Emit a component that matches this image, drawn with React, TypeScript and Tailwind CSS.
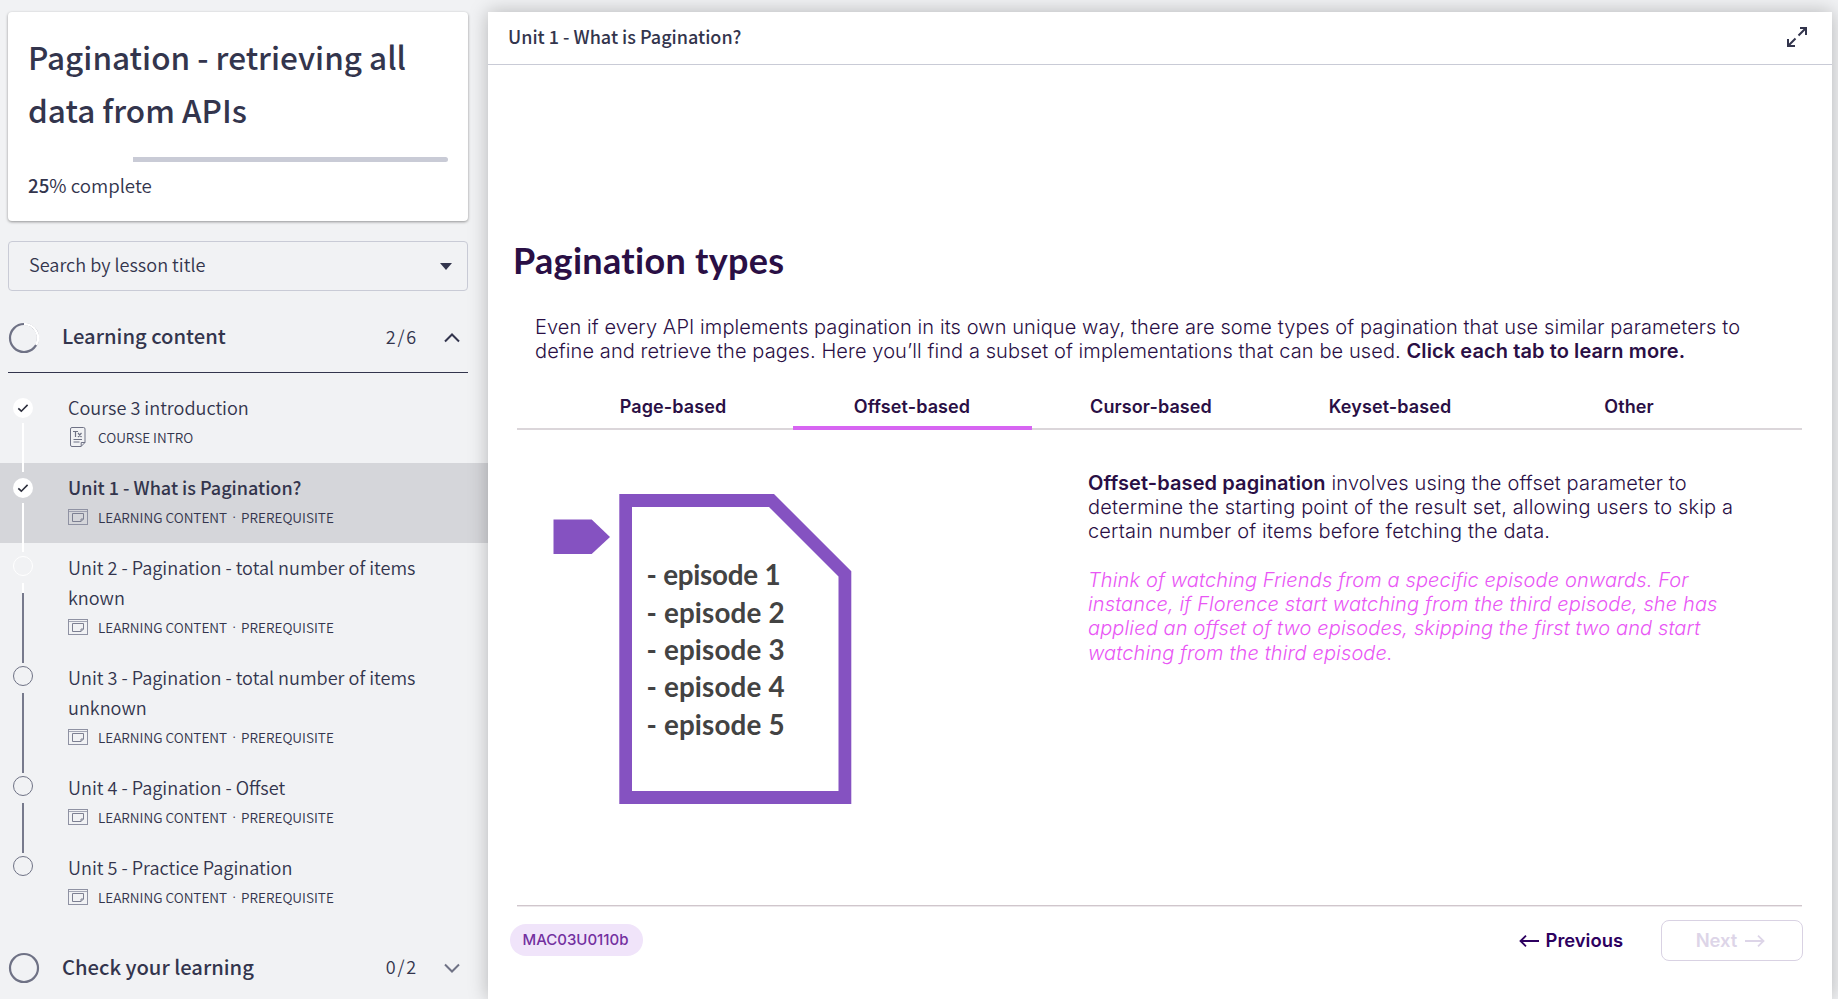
import React from "react";

const SOURCE = "font-['Noto_Sans_CJK_SC',sans-serif]";
const INTER = "font-['Inter',sans-serif]";

type Lesson = {
  title: string[];
  meta: string[];
  state: "done" | "next" | "open";
  active?: boolean;
  last?: boolean;
  doc?: boolean;
};

const PREREQUISITE = ["LEARNING CONTENT", "PREREQUISITE"];

const lessons: Lesson[] = [
  { title: ["Course 3 introduction"], meta: ["COURSE INTRO"], state: "done", doc: true },
  { title: ["Unit 1 - What is Pagination?"], meta: PREREQUISITE, state: "done", active: true },
  { title: ["Unit 2 - Pagination - total number of items", "known"], meta: PREREQUISITE, state: "next" },
  { title: ["Unit 3 - Pagination - total number of items", "unknown"], meta: PREREQUISITE, state: "open" },
  { title: ["Unit 4 - Pagination - Offset"], meta: PREREQUISITE, state: "open" },
  { title: ["Unit 5 - Practice Pagination"], meta: PREREQUISITE, state: "open", last: true },
];

const tabs = ["Page-based", "Offset-based", "Cursor-based", "Keyset-based", "Other"];

function TextDocIcon() {
  return (
    <svg width="20" height="20" viewBox="0 0 20 20" fill="none" stroke="#6f7285" strokeWidth="1">
      <path d="M4 .5h11.500a1.500 1.500 0 0 1 1.500 1.500v13.500l-4 4H4A1.500 1.500 0 0 1 2.500 18V2A1.500 1.500 0 0 1 4 .5z" />
      <path d="M17 15.500h-3.800v4" />
      <path d="M5 4.500h5M7.500 4.500v5.500M10 6l3.500 4M13.500 6L10 10" strokeWidth="1.200" />
      <path d="M5.500 12.500h8.500M5.500 15h6" />
    </svg>
  );
}

function ContentIcon() {
  return (
    <svg width="20" height="16" viewBox="0 0 20 16" fill="none" stroke="#8f92a3" strokeWidth="1">
      <rect x=".5" y=".5" width="19" height="15" />
      <path d="M.5 2.500h19" strokeWidth=".8" />
      <path d="M4.500 4.500h11v5.500l-2.500 2.500H4.500z" stroke="#7d8092" />
      <path d="M15.500 10H13v2.500" stroke="#7d8092" />
    </svg>
  );
}

function Marker({ state }: { state: Lesson["state"] }) {
  if (state === "done") {
    return (
      <svg className="mt-[15px] shrink-0" width="20" height="20" viewBox="0 0 20 20" fill="none">
        <circle cx="10" cy="10" r="10" fill="#fff" />
        <path d="M5.300 10.300l3 2.900 6.300-6.300" stroke="#2d2f3d" strokeWidth="1.600" />
      </svg>
    );
  }
  return (
    <svg className="mt-[13px] mb-[2px] shrink-0" width="20" height="20" viewBox="0 0 20 20" fill="none">
      <circle cx="10" cy="10" r="9.500" stroke={state === "next" ? "#fff" : "#6f7285"} />
    </svg>
  );
}

function Rail({ lesson }: { lesson: Lesson }) {
  return (
    <div className="z-10 flex w-[20px] shrink-0 flex-col items-center">
      <Marker state={lesson.state} />
      {!lesson.last && (
        <div className={"mt-[5px] flex w-[2px] grow flex-col " + (lesson.state === "done" ? "-mb-[9px] bg-white" : "-mb-[10px] bg-[#777a8c]")}>
          {lesson.state === "next" && <div className="h-[10px] bg-white" />}
        </div>
      )}
    </div>
  );
}

function SectionHeader({ title, count, open }: { title: string; count: string; open: boolean }) {
  return (
    <div className={"ml-[8px] flex h-[70px] w-[460px] shrink-0 items-center " + (open ? "border-b border-[#33354d]" : "")}>
      <svg width="32" height="32" viewBox="0 0 32 32" fill="none" strokeWidth="2.200">
        <circle cx="16" cy="16" r="14" stroke="#6f7285" />
        {open && <path d="M16 2a14 14 0 0 1 12.100 21" stroke="#fff" strokeWidth="2.600" />}
      </svg>
      <div className="ml-[22px] pb-[3px] text-[20.200px] font-medium leading-[32px] whitespace-nowrap">{title}</div>
      <div className="mr-[26px] ml-auto pb-[4px] text-[18px] leading-[30px] font-[350] tracking-[1.800px]">{count}</div>
      <svg className="mr-[8px]" width="16" height="10" viewBox="0 0 16 10" fill="none" stroke={open ? "#33354d" : "#6f7285"} strokeWidth="2">
        <path d={open ? "M1 8.500l7-7 7 7" : "M1 1.500l7 7 7-7"} />
      </svg>
    </div>
  );
}

function Sidebar() {
  return (
    <aside className={"flex w-[488px] shrink-0 flex-col pt-[12px] text-[#33354d] " + SOURCE}>
      <div className="ml-[8px] h-[209px] w-[460px] shrink-0 rounded-[4px] bg-white pt-[18px] px-[20px] shadow-[0_1px_3px_rgba(0,0,0,0.4)]">
        <h1 className="text-[31.500px] font-medium leading-[53px] whitespace-nowrap">
          Pagination - retrieving all
          <br />
          data from APIs
        </h1>
        <div className="mt-[21px] flex h-[5px] overflow-hidden rounded-full">
          <div className="w-[105px] bg-white" />
          <div className="grow bg-[#c9cbd6]" />
        </div>
        <div className="mt-[8px] text-[18.700px] leading-[30px] font-[350]">
          <span className="font-medium">25</span>
          <span className="font-normal">%</span> complete
        </div>
      </div>
      <div className="mt-[20px] ml-[8px] flex h-[50px] w-[460px] shrink-0 items-center justify-between rounded-[4px] border border-[#c9cbd6] pr-[15px] pl-[20px]">
        <span className="pb-[5px] text-[18.100px] leading-[30px] font-[350]">Search by lesson title</span>
        <svg width="12" height="7" viewBox="0 0 12 7" fill="#33354d">
          <path d="M0 0h12L6 7z" />
        </svg>
      </div>
      <div className="mt-[12px] shrink-0">
        <SectionHeader title="Learning content" count="2/6" open />
      </div>
      <ul className="mt-[10px] shrink-0">
        {lessons.map((l) => (
          <li key={l.title[0]} className={"flex pl-[13px] " + (l.active ? "bg-[#d5d6da]" : "")}>
            <Rail lesson={l} />
            <div className="ml-[35px] pt-[9px] pb-[11px]">
              <div className={"leading-[30px] whitespace-nowrap " + (l.active ? "text-[18px] font-medium" : "text-[18.100px] font-[350]")}>
                {l.title.map((t) => (
                  <div key={t}>{t}</div>
                ))}
              </div>
              <div className="flex h-[30px] items-center">
                <div className="flex w-[30px]">{l.doc ? <TextDocIcon /> : <ContentIcon />}</div>
                <span className="flex pb-[1px] text-[13.550px] leading-[30px] font-[350] whitespace-nowrap">
                  {l.meta.map((m, i) => (
                    <React.Fragment key={m}>
                      {i > 0 && <span className="w-[14px] text-center font-['Inter']">·</span>}
                      {m}
                    </React.Fragment>
                  ))}
                </span>
              </div>
            </div>
          </li>
        ))}
      </ul>
      <div className="mt-[10px] shrink-0">
        <SectionHeader title="Check your learning" count="0/2" open={false} />
      </div>
    </aside>
  );
}

function DocumentDrawing() {
  return (
    <svg width="300" height="312" viewBox="553 493 300 312" fill="#8552c1">
      <path d="M553.500 519.500h38.200l18.300 17.400-18.300 17.100h-38.200z" />
      <path fillRule="evenodd" d="M619.300 494H774l77.300 77.300V804h-232zM632 507v284h206.500V576.500L769 507z" />
      <g fill="#434343" fontFamily="Lato" fontWeight="700" fontSize="27.800">
        {[585, 622.7, 660, 697.300, 735].map((y, i) => (
          <text key={y} x="646.500" y={y} textLength={i === 0 ? 134 : 138}>
            {"- episode " + (i + 1)}
          </text>
        ))}
      </g>
    </svg>
  );
}

function Player() {
  return (
    <main className="z-20 mt-[12px] flex w-[1344px] shrink-0 flex-col bg-white shadow-[0_0_18px_rgba(0,0,0,0.25)]">
      <header className={"flex h-[53px] shrink-0 items-center justify-between border-b border-[#c9cbd6] pr-[25px] pl-[20px] text-[#33354d] " + SOURCE}>
        <span className="pb-[4px] text-[18px] font-medium leading-[30px]">Unit 1 - What is Pagination?</span>
        <svg className="mb-[2px]" width="20" height="20" viewBox="0 0 20 20" fill="none" stroke="#33354d" strokeWidth="2">
          <path d="M13 1h6v7M19 1l-7.500 7.500M1 12v7h7M1 19l7.500-7.500" />
        </svg>
      </header>
      <section className={"flex flex-col text-[#2a0f45] " + INTER}>
        <h2 className="mt-[170px] ml-[25px] font-['Lato',sans-serif] text-[36px] leading-[50px] font-bold tracking-[0.300px] whitespace-nowrap [font-variant-ligatures:none]">
          Pagination types
        </h2>
        <p className="mt-[30px] ml-[47px] text-[20px] leading-[24.300px] font-light tracking-[0.090px] whitespace-nowrap">
          Even if every API implements pagination in its own unique way, there are some types of pagination that use similar parameters to
          <br />
          define and retrieve the pages. Here you’ll find a subset of implementations that can be used.{" "}
          <strong className="font-semibold">Click each tab to learn more.</strong>
        </p>
        <nav className="mt-[23px] ml-[29px] flex h-[43px] w-[1285px] border-b-2 border-[#dbd6da] pl-[36.500px]">
          {tabs.map((t, i) => (
            <div
              key={t}
              className={
                "flex h-[43px] w-[239px] justify-center text-[18px] leading-[39px] font-semibold tracking-[0.100px] " +
                (i === 1 ? "border-b-4 border-[#d765f2]" : "")
              }
            >
              {t}
            </div>
          ))}
        </nav>
        <div className="flex">
          <div className="mt-[63px] ml-[65px] w-[535px]">
            <DocumentDrawing />
          </div>
          <div className="mt-[41px] text-[20px] leading-[24.300px] font-light tracking-[0.160px] whitespace-nowrap">
            <p>
              <strong className="font-semibold tracking-[0.100px]">Offset-based pagination</strong> involves using the offset parameter to
              <br />
              determine the starting point of the result set, allowing users to skip a
              <br />
              certain number of items before fetching the data.
            </p>
            <p className="mt-[24.300px] tracking-[0.130px] text-[#e956f5] italic">
              Think of watching Friends from a specific episode onwards. For
              <br />
              instance, if Florence start watching from the third episode, she has
              <br />
              applied an offset of two episodes, skipping the first two and start
              <br />
              watching from the third episode.
            </p>
          </div>
        </div>
        <div className="mt-[100px] ml-[29px] h-[2px] w-[1285px] border-t border-[#d0c6cc] bg-[#ece8eb]" />
        <footer className="mt-[13px] ml-[22px] flex w-[1293px] items-center">
          <span className="flex h-[32px] w-[133px] items-center justify-center rounded-full bg-[#f0e4fa] pt-[1px] pr-[2px] text-[15px] font-medium text-[#7330a0]">MAC03U0110b</span>
          <div className="ml-auto flex items-center pt-[1px] text-[18.400px] font-semibold text-[#2d0060]">
            <svg className="mr-[7px]" width="20" height="12" viewBox="0 0 20 12" fill="none" stroke="#2d0060" strokeWidth="1.800">
              <path d="M20 6H1.500M7 .7L1.500 6 7 11.300" />
            </svg>
            Previous
          </div>
          <div className="ml-[38px] flex h-[41px] w-[142px] items-center justify-center rounded-[8px] border border-[#d9d2e3] pt-[1px] pr-[3px] text-[18.400px] font-semibold text-[#ddd5e8]">
            Next
            <svg className="ml-[8px]" width="20" height="12" viewBox="0 0 20 12" fill="none" stroke="#ddd5e8" strokeWidth="1.800">
              <path d="M0 6h18.500M13 .7L18.500 6 13 11.300" />
            </svg>
          </div>
        </footer>
      </section>
    </main>
  );
}

export default function App() {
  return (
    <div className="flex h-[999px] w-[1838px] overflow-hidden bg-[#f1f2f4]">
      <Sidebar />
      <Player />
    </div>
  );
}
